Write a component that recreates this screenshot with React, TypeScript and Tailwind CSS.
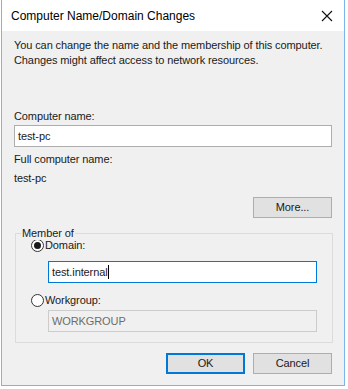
export default function App() {
  return (
    <div className="w-[348px] h-[389px] bg-white" style={{ fontFamily: '"Liberation Sans", Arial, sans-serif' }}>
      <div className="ml-px w-[344px] h-[386px] border-x border-b border-[#7ab5ea] flex flex-col">
        {/* title bar */}
        <div className="h-[31px] bg-white flex items-center justify-between pl-[9px] pr-[10px] shrink-0">
          <span className="text-[12px] text-black">Computer Name/Domain Changes</span>
          <svg width="12" height="12" viewBox="0 0 12 12" className="mr-[1px]">
            <path d="M1 1 L11 11 M11 1 L1 11" stroke="#111" strokeWidth="1.1" />
          </svg>
        </div>

        {/* body */}
        <div className="flex-1 bg-[#f0f0f0] px-[12px] pt-[7px] text-[11px] text-[#1a1a1a] leading-[15px] tracking-[-0.1px]">
          <p className="whitespace-nowrap">You can change the name and the membership of this computer.</p>
          <p>Changes might affect access to network resources.</p>

          <div className="mt-[41px]">Computer name:</div>
          <div className="mt-[1px] h-[22px] bg-white border border-[#adadad] flex items-center px-[3px]">test-pc</div>

          <div className="mt-[5px]">Full computer name:</div>
          <div className="mt-[4px]">test-pc</div>

          <div className="flex justify-end mt-[11px]">
            <button className="w-[79px] h-[21px] bg-[#e1e1e1] border border-[#adadad]">More...</button>
          </div>

          {/* group box */}
          <div className="relative mt-[15px] ml-px mr-[-1px] h-[110px] border border-[#dcdcdc]">
            <span className="absolute left-[5px] top-[-7px] bg-[#f0f0f0] px-[1px] leading-[13px]">Member of</span>
            <div className="pl-[15px] pt-[3px]">
              <label className="flex items-center gap-[1px] h-[14px] mt-[1px]">
                <span className="w-[13px] h-[13px] rounded-full border border-[#333] bg-white flex items-center justify-center">
                  <span className="w-[7px] h-[7px] rounded-full bg-[#1a1a1a]" />
                </span>
                <span>Domain:</span>
              </label>
              <div className="ml-[17px] mr-[15px] mt-[9px] h-[22px] bg-white border border-[#0078d7] flex items-center px-[3px]">
                <span>test.internal</span>
                <span className="w-px h-[14px] bg-black" />
              </div>
              <label className="flex items-center gap-[1px] h-[14px] mt-[10px]">
                <span className="w-[13px] h-[13px] rounded-full border border-[#333] bg-white" />
                <span>Workgroup:</span>
              </label>
              <div className="ml-[17px] mr-[15px] mt-[3px] h-[22px] bg-[#f0f0f0] border border-[#cccccc] flex items-center px-[3px] text-[#6d6d6d]">
                WORKGROUP
              </div>
            </div>
          </div>

          <div className="flex justify-end gap-[8px] mt-[10px]">
            <button className="w-[79px] h-[21px] bg-[#e1e1e1] border-2 border-[#0078d7]">OK</button>
            <button className="w-[79px] h-[21px] bg-[#e1e1e1] border border-[#adadad]">Cancel</button>
          </div>
        </div>
      </div>
    </div>
  );
}
